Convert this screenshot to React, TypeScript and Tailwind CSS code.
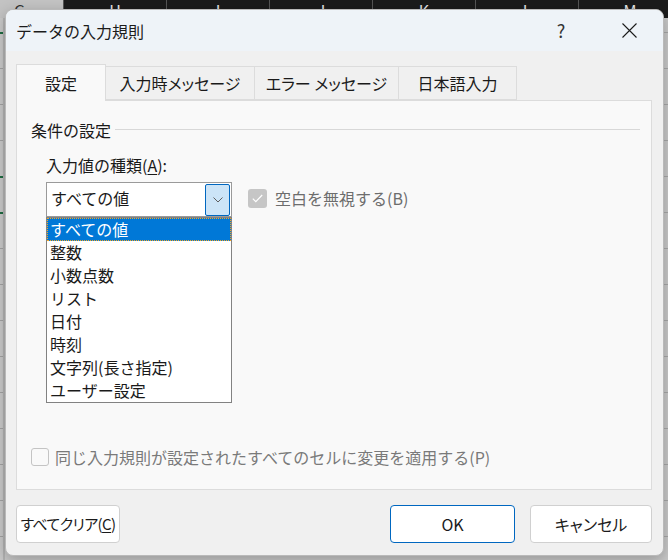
import { Fragment } from "react";

const cols = ["H", "I", "J", "K", "L", "M"];
const rowLines = [32, 68, 104, 140, 176, 212, 248, 284, 320, 356, 392, 428, 464, 500, 536];
const greenRows = [32, 176, 212];

const types = ["すべての値", "整数", "小数点数", "リスト", "日付", "時刻", "文字列(長さ指定)", "ユーザー設定"];
const tabs = [
  { label: "設定", w: "w-[90px]" },
  { label: "入力時メッセージ", w: "w-[149px]" },
  { label: "エラー メッセージ", w: "w-[144px]" },
  { label: "日本語入力", w: "w-[118px]" },
];

function Chevron() {
  return (
    <svg width="10" height="6" viewBox="0 0 10 6" fill="none">
      <path d="M0.5 0.5 L5 5 L9.5 0.5" stroke="#5f5f5f" strokeWidth="1" />
    </svg>
  );
}

function CheckMark() {
  return (
    <svg width="11" height="9" viewBox="0 0 11 9" fill="none">
      <path d="M0.8 4.6 L3.8 7.6 L10.2 1" stroke="#ffffff" strokeWidth="1.2" />
    </svg>
  );
}

export default function App() {
  return (
    <div className="relative w-[668px] h-[560px] overflow-hidden bg-[#c9c9c9] font-['Noto_Sans_CJK_JP',sans-serif] text-[16px] text-[#1a1a1a]">
      {/* spreadsheet behind the dialog */}
      <div className="flex h-[18px] text-[16px] leading-[20px]">
        <div className="w-[63px] shrink-0 bg-[#c3c3c3] pl-[14px] text-[#333]">G</div>
        {cols.map((c) => (
          <div key={c} className="w-[103px] shrink-0 border-l border-[#555] bg-[#1b1b1b] text-center text-[#e6e6e6]">
            {c}
          </div>
        ))}
      </div>
      {rowLines.map((y) => (
        <Fragment key={y}>
          <div
            className={`absolute left-0 w-[5px] ${greenRows.includes(y) ? "h-[2px] bg-[#1e6b41]" : "h-px bg-[#a3a3a3]"}`}
            style={{ top: y }}
          />
          <div className="absolute right-0 w-[4px] h-px bg-[#a8a8a8]" style={{ top: y }} />
        </Fragment>
      ))}
      <div className="absolute left-[3px] top-[18px] bottom-0 w-[2px] bg-[#b3b3b3]" />

      {/* dialog */}
      <div className="absolute left-[5px] top-[9px] w-[659px] h-[547px] flex flex-col rounded-lg border border-[#b9b9b9] bg-[#f0f0f0] shadow-[0_4px_14px_rgba(0,0,0,0.25)] overflow-hidden">
        {/* title bar */}
        <div className="h-[41px] shrink-0 flex items-center bg-[#eef3f8]">
          <span className="pl-[10px] flex-1 text-[16px] text-[#1b1b1b]">データの入力規則</span>
          <div className="w-[68px] h-full flex items-center justify-center text-[18px] text-[#333]">?</div>
          <div className="w-[68px] h-full flex items-center justify-center">
            <svg width="15" height="15" viewBox="0 0 15 15" fill="none">
              <path d="M0.5 0.5 L14.5 14.5 M14.5 0.5 L0.5 14.5" stroke="#1b1b1b" strokeWidth="1.1" />
            </svg>
          </div>
        </div>

        {/* body */}
        <div className="flex-1 flex flex-col pl-[10px] pr-[11px] pt-[13px]">
          {/* tabs */}
          <div className="flex items-end h-[36px]">
            {tabs.map((t, i) =>
              i === 0 ? (
                <div
                  key={t.label}
                  className={`${t.w} h-[37px] -mb-px z-10 flex items-center justify-center border border-b-0 border-[#dcdcdc] bg-[#f9f9f9]`}
                >
                  {t.label}
                </div>
              ) : (
                <div
                  key={t.label}
                  className={`${t.w} h-[34px] flex items-center justify-center whitespace-nowrap border border-l-0 border-[#dcdcdc] bg-[#f0f0f0] [font-feature-settings:'palt']`}
                >
                  {t.label}
                </div>
              )
            )}
          </div>

          {/* panel */}
          <div className="h-[390px] border border-[#dcdcdc] bg-[#f9f9f9] flex flex-col pl-[14px] pr-[11px]">
            <div className="flex items-center gap-[4px] mt-[17px] h-[24px]">
              <span>条件の設定</span>
              <div className="flex-1 h-px bg-[#d8d8d8] mt-[-1px]" />
            </div>

            <div className="flex flex-col pl-[15px] mt-[11px]">
              <div className="h-[24px] leading-[24px]">
                入力値の種類(<span className="underline underline-offset-2">A</span>):
              </div>

              <div className="flex items-start mt-[5px]">
                <div className="flex flex-col">
                  {/* combobox */}
                  <div className="w-[186px] h-[35px] flex items-center border border-[#9a9a9a] bg-white pl-[4px] pr-px">
                    <span className="flex-1 -mt-[3px]">すべての値</span>
                    <div className="w-[25px] h-[32px] flex items-center justify-center rounded-[2px] border border-[#0067c0] bg-[#cce4f7]">
                      <Chevron />
                    </div>
                  </div>
                  {/* opened list */}
                  <div className="w-[186px] border border-[#828282] bg-white flex flex-col">
                    {types.map((t, i) => (
                      <div
                        key={t}
                        className={`h-[23px] leading-[21px] pl-[2px] ${
                          i === 0
                            ? "bg-[#0078d7] text-white border border-dotted border-[#f5a623]"
                            : "border border-transparent"
                        }`}
                      >
                        {t}
                      </div>
                    ))}
                  </div>
                </div>

                {/* ignore blank */}
                <div className="flex items-center ml-[16px] mt-[4px] gap-[8px] text-[#6d6d6d]">
                  <div className="w-[19px] h-[19px] rounded-[3px] bg-[#c6c6c6] flex items-center justify-center">
                    <CheckMark />
                  </div>
                  <span>空白を無視する(B)</span>
                </div>
              </div>
            </div>

            <div className="flex-1" />

            <div className="flex items-center gap-[6px] mb-[20px] text-[#7a7a7a]">
              <div className="w-[18px] h-[18px] rounded-[3px] border border-[#c4c4c4] bg-[#f9f9f9]" />
              <span>同じ入力規則が設定されたすべてのセルに変更を適用する(P)</span>
            </div>
          </div>

          {/* buttons */}
          <div className="flex items-center mt-[15px]">
            <button className="w-[104px] h-[38px] rounded-[4px] border border-[#d0d0d0] bg-white text-[15px] tracking-[-0.6px] whitespace-nowrap [font-feature-settings:'palt']">
              すべてクリア(<span className="underline underline-offset-2">C</span>)
            </button>
            <div className="flex-1" />
            <button className="w-[125px] h-[38px] rounded-[4px] border border-[#0067c0] bg-white text-[16px]">
              OK
            </button>
            <button className="w-[122px] h-[38px] ml-[15px] rounded-[4px] border border-[#d0d0d0] bg-white text-[16px] [font-feature-settings:'palt']">
              キャンセル
            </button>
          </div>
        </div>
      </div>
    </div>
  );
}
